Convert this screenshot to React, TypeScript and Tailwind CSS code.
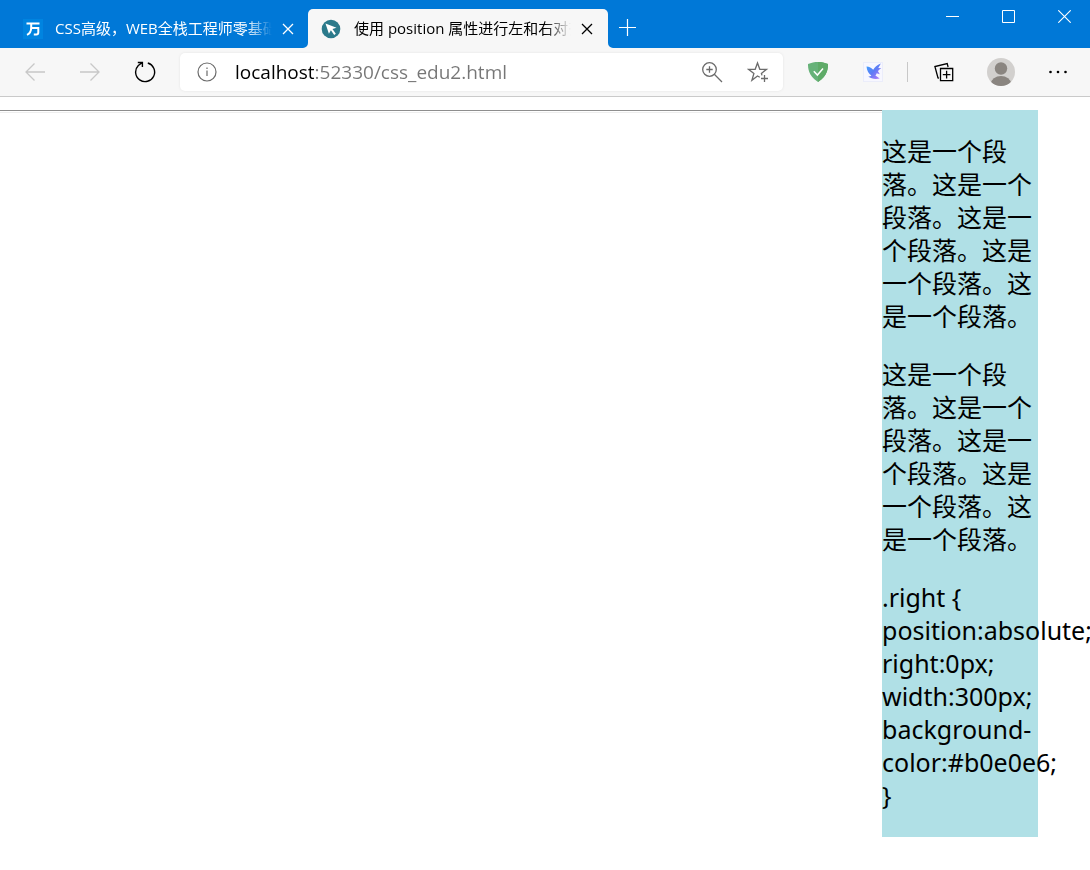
import type { ReactNode } from "react";

const PARAGRAPH = "这是一个段落。这是一个段落。这是一个段落。这是一个段落。这是一个段落。";

const CloseIcon = ({ className }: { className?: string }) => (
    <svg className={className} width="12" height="12" viewBox="0 0 12 12" fill="none" stroke="currentColor" strokeWidth="1.3">
        <path d="M1 1l10 10M11 1L1 11" />
    </svg>
);

const ToolButton = ({ label, className, children }: { label: string; className: string; children: ReactNode }) => (
    <button type="button" aria-label={label} className={`flex shrink-0 items-center justify-center ${className}`}>
        {children}
    </button>
);

const TabBar = () => {
    return (
        <header className="flex h-12 items-end bg-[#0078d7] text-[15px] leading-5">
            {/* Background tab */}
            <div className="flex h-[39px] w-[308px] shrink-0 items-center pl-[23px] text-white">
                <svg width="20" height="20" viewBox="0 0 20 20" className="shrink-0" fill="none" stroke="#fff" strokeWidth="2">
                    <rect width="20" height="20" fill="#0084e0" stroke="none" />
                    <path d="M3.500 4.600h13M8.200 5v3.500C8.200 12 7 14.500 4 15.800M8 9h7.300v4.500c0 1.400-.6 2-2 2h-2.500" />
                </svg>
                <span className="ml-3 h-[22px] w-[217px] overflow-hidden whitespace-nowrap [mask-image:linear-gradient(to_right,#000_88%,transparent)]">
                    CSS高级，WEB全栈工程师零基础
                </span>
                <button type="button" aria-label="关闭标签页" className="ml-[10px]">
                    <CloseIcon />
                </button>
            </div>

            {/* Active tab */}
            <div className="relative flex h-[39px] w-[300px] shrink-0 items-center rounded-t-[5px] bg-[#f7f7f7] pl-[13px] text-black">
                <svg width="20" height="20" viewBox="0 0 20 20" className="shrink-0">
                    <circle cx="10" cy="10" r="9.300" fill="#2b7a8b" />
                    <path d="M4.500 4.500l11 4.300-4 1.300 3.300 4.600-1.600 1.200-3.300-4.700-2 3.600z" fill="#fff" />
                </svg>
                <span className="ml-[13px] h-[22px] w-[217px] overflow-hidden whitespace-nowrap [mask-image:linear-gradient(to_right,#000_88%,transparent)]">
                    使用 position 属性进行左和右对齐
                </span>
                <button type="button" aria-label="关闭标签页" className="ml-[10px]">
                    <CloseIcon />
                </button>
                {/* Flared bottom corners */}
                <svg width="5" height="5" viewBox="0 0 5 5" className="absolute bottom-0 -left-[5px]" fill="#f7f7f7">
                    <path d="M5 0v5H0a5 5 0 0 0 5-5z" />
                </svg>
                <svg width="5" height="5" viewBox="0 0 5 5" className="absolute -right-[5px] bottom-0" fill="#f7f7f7">
                    <path d="M0 0v5h5a5 5 0 0 1-5-5z" />
                </svg>
            </div>

            <button type="button" aria-label="新建标签页" className="flex h-[41px] w-[38px] items-center justify-center text-white">
                <svg width="17" height="17" viewBox="0 0 17 17" fill="none" stroke="currentColor" strokeWidth="1.200">
                    <path d="M8.500 0v17M0 8.500h17" />
                </svg>
            </button>

            {/* Window controls */}
            <div className="ml-auto flex gap-1 self-start text-white">
                <ToolButton label="最小化" className="h-8 w-13">
                    <svg width="13" height="13" viewBox="0 0 13 13" fill="none" stroke="currentColor">
                        <path d="M0 6.500h13" />
                    </svg>
                </ToolButton>
                <ToolButton label="最大化" className="h-8 w-13">
                    <svg width="13" height="13" viewBox="0 0 13 13" fill="none" stroke="currentColor">
                        <path d="M.5.5h12v12H.5z" />
                    </svg>
                </ToolButton>
                <ToolButton label="关闭" className="h-8 w-13">
                    <svg width="13" height="13" viewBox="0 0 13 13" fill="none" stroke="currentColor" strokeWidth="1.100">
                        <path d="M.3.3l12.400 12.400M12.700.3L.3 12.700" />
                    </svg>
                </ToolButton>
            </div>
        </header>
    );
};

const Toolbar = () => {
    return (
        <nav className="flex h-[49px] items-center border-b border-[#cacaca] bg-[#f7f7f7] pr-1 pl-[7px]">
            <ToolButton label="后退" className="h-10 w-[55px] text-[#c8c8c8]">
                <svg width="20" height="18" viewBox="0 0 20 18" fill="none" stroke="currentColor" strokeWidth="1.300">
                    <path d="M20 9H1M9.500.5L1 9l8.500 8.500" />
                </svg>
            </ToolButton>
            <ToolButton label="前进" className="h-10 w-[55px] text-[#c8c8c8]">
                <svg width="20" height="18" viewBox="0 0 20 18" fill="none" stroke="currentColor" strokeWidth="1.300">
                    <path d="M0 9h19M10.500.5L19 9l-8.500 8.500" />
                </svg>
            </ToolButton>
            <ToolButton label="刷新" className="h-10 w-[55px] text-black">
                <svg width="22" height="22" viewBox="0 0 22 22" fill="none" stroke="currentColor" strokeWidth="1.400">
                    <path d="M13.800 2A9.500 9.500 0 1 1 4.300 4.500L8 1.800M3.800 1.500h4.600v4.600" />
                </svg>
            </ToolButton>

            {/* Address bar */}
            <div className="ml-2 flex h-[38px] min-w-0 flex-1 items-center rounded-[5px] bg-white pl-4 shadow-[0_0_3px_rgba(0,0,0,0.08)]">
                <svg width="22" height="22" viewBox="0 0 22 22" className="shrink-0" fill="none" stroke="#6b6b6b" strokeWidth="1.200">
                    <circle cx="11" cy="11" r="9" />
                    <path d="M11 9.500v5.500M11 6.500v1.500" />
                </svg>
                <input
                    type="text"
                    aria-label="地址栏"
                    defaultValue="localhost:52330/css_edu2.html"
                    className="ml-[17px] min-w-0 flex-1 bg-[linear-gradient(to_right,#000_79px,#767676_79px)] bg-clip-text text-[19px] leading-7 text-transparent outline-none"
                />
                <ToolButton label="缩放" className="h-[38px] w-[46px]">
                    <svg width="22" height="22" viewBox="0 0 22 22" fill="none" stroke="#6b6b6b" strokeWidth="1.300">
                        <circle cx="8.500" cy="8.500" r="6.800" />
                        <path d="M13.300 13.300l7.700 7.700M8.500 5.300v6.400M5.300 8.500h6.400" />
                    </svg>
                </ToolButton>
                <ToolButton label="收藏" className="mr-[2px] h-[38px] w-[46px]">
                    <svg width="22" height="22" viewBox="0 0 22 22" fill="none" stroke="#6b6b6b" strokeWidth="1.300">
                        <path d="M12.800 16.300L10.500 15l-5.600 4.300 2-6.900L1.500 8.300h6.700L10.500 2l2.300 6.300h6.700l-5.100 4.100.6 2M17.500 14v7M14 17.500h7" />
                    </svg>
                </ToolButton>
            </div>

            {/* Extensions */}
            <ToolButton label="AdGuard" className="ml-[7px] h-10 w-[55px]">
                <svg width="20" height="20" viewBox="0 0 20 20">
                    <path d="M10 0C6.800 0 3 .6 0 2.100c0 3.400 0 11.900 10 17.800 10-5.900 10-14.400 10-17.800C17 .6 13.200 0 10 0z" fill="#67b279" />
                    <path d="M10 0v19.900c10-5.900 10-14.400 10-17.800C17 .6 13.200 0 10 0z" fill="#5fab68" />
                    <path d="M5.800 9.300l3.600 3.800 5.600-6.600" fill="none" stroke="#fff" strokeWidth="1.500" />
                </svg>
            </ToolButton>
            <ToolButton label="迅雷" className="h-10 w-[55px]">
                <svg width="20" height="20" viewBox="0 0 20 20">
                    <defs>
                        <linearGradient id="bird" x1="0" y1="0" x2="1" y2="1">
                            <stop offset="0" stopColor="#38a5ff" />
                            <stop offset="0.500" stopColor="#5f7cf5" />
                            <stop offset="1" stopColor="#c07bfa" />
                        </linearGradient>
                    </defs>
                    <rect x=".5" y=".5" width="19" height="19" fill="#f7f7ff" stroke="#ebedfa" />
                    <path d="M3.500 4.500c2.800.2 5 1.300 6.700 3.300 1.300-2.700 3.900-4.800 7.600-6.300-.9 1.800-1.900 3.200-2.500 4.600l3 .2c-1.700.9-2.800 1.800-3.300 3l1.800 2.900-3.100-.9c-.2.800-.7 1.600-1.300 2.200l4.300 3c-3.900 1-8.600.5-11.500-1.900 1.400 0 2.500-.4 3.200-1.100C5.700 12 3.900 8.800 3.500 4.500z" fill="url(#bird)" />
                </svg>
            </ToolButton>
            <div className="mx-[7px] h-5 w-px shrink-0 bg-[#c8c8c8]" />
            <ToolButton label="集锦" className="h-10 w-[57px] text-black">
                <svg width="20" height="20" viewBox="0 0 20 20" fill="none" stroke="currentColor" strokeWidth="1.300">
                    <path d="M6.500 6.500h12.200v12.200H6.500zM12.600 8.800v7.600M8.800 12.600h7.600M5 16.200l-1-.3L.9 4.500l12.300-3 .9 3.500" />
                </svg>
            </ToolButton>
            <ToolButton label="个人" className="h-10 w-[57px]">
                <svg width="28" height="28" viewBox="0 0 28 28">
                    <defs>
                        <clipPath id="avatar">
                            <circle cx="14" cy="14" r="14" />
                        </clipPath>
                    </defs>
                    <g clipPath="url(#avatar)">
                        <rect width="28" height="28" fill="#d2d0ce" />
                        <circle cx="14" cy="10.500" r="6.200" fill="#8a8580" />
                        <ellipse cx="14" cy="25.500" rx="10" ry="7.500" fill="#8a8580" />
                    </g>
                </svg>
            </ToolButton>
            <ToolButton label="设置及其他" className="h-10 w-[57px]">
                <svg width="20" height="4" viewBox="0 0 20 4">
                    <circle cx="2.500" cy="2" r="1.300" />
                    <circle cx="10" cy="2" r="1.300" />
                    <circle cx="17.500" cy="2" r="1.300" />
                </svg>
            </ToolButton>
        </nav>
    );
};

const App = () => {
    return (
        <div className="min-h-screen overflow-x-hidden bg-white font-['Open_Sans','Noto_Sans_CJK_SC',sans-serif]">
            <TabBar />
            <Toolbar />

            {/* Page content */}
            <main className="flex items-start pt-[13px] font-['Noto_Sans','Noto_Sans_CJK_SC',sans-serif] text-[25px] leading-[33px] text-black">
                <hr className="h-[3px] flex-1 border-t border-b border-t-[#8e8e8e] border-b-[#eeeeee]" />
                <div className="mr-[52px] w-[156px] shrink-0 space-y-[25px] bg-[#b0e0e6] py-[25px]">
                    <p>{PARAGRAPH}</p>
                    <p>{PARAGRAPH}</p>
                    <p>
                        .right {"{"}
                        <br />
                        position:absolute;
                        <br />
                        right:0px;
                        <br />
                        width:300px;
                        <br />
                        background-
                        <br />
                        color:#b0e0e6;
                        <br />
                        {"}"}
                    </p>
                </div>
            </main>
        </div>
    );
};

export default App;
